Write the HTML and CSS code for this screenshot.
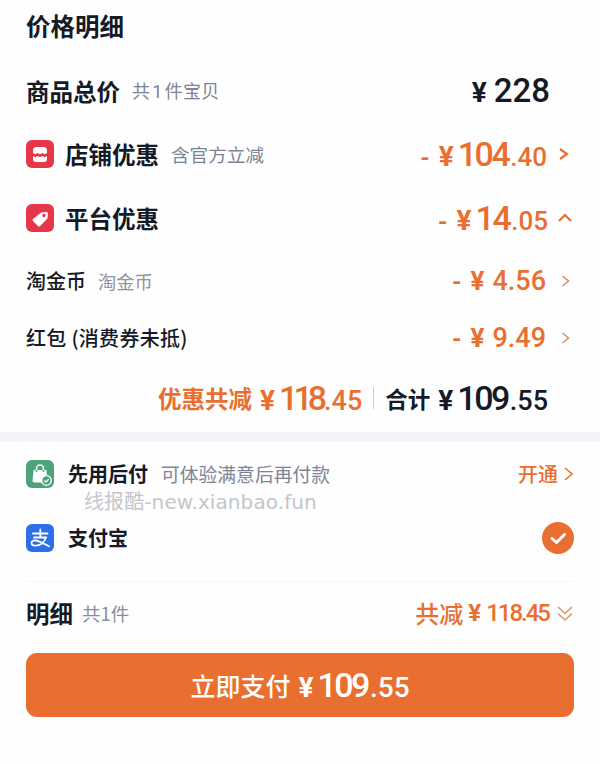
FILE: index.html
```html
<!DOCTYPE html>
<html lang="zh">
<head>
<meta charset="utf-8">
<title>价格明细</title>
<link rel="stylesheet" href="styles.css">
</head>
<body>
<section class="price">
  <h1 class="title">价格明细</h1>
  <div class="row row-total">
    <span class="name-lg">商品总价</span><span class="note note-total">共<i class="num-note">1</i>件宝贝</span>
    <span class="amount dark amount-total"><span class="yen yen-total">¥</span><span class="plain">228</span></span>
  </div>
  <div class="row row-shop">
    <svg class="ico" viewBox="0 0 28 28"><rect width="28" height="28" rx="6" fill="#e5374a"/><path d="M7 13v-2.500A3.500 3.500 0 0 1 10.500 7h7a3.500 3.500 0 0 1 3.500 3.500V13l-2.300 1.300-2.400-1.300-2.300 1.300-2.300-1.300-2.400 1.300z M7 16l2.300 1.300 2.400-1.300 2.300 1.300 2.300-1.300 2.400 1.300L21 16v3a3 3 0 0 1-3 3h-8a3 3 0 0 1-3-3z" fill="#fff"/></svg>
    <span class="name-lg">店铺优惠</span><span class="note note-shop">含官方立减</span>
    <span class="amount orange"><span class="minus">-</span><span class="yen">¥</span><span class="big">104</span><span class="dec">.40</span></span>
    <svg class="chev" viewBox="0 0 12 14"><path d="M2 2l7 5-7 5"/></svg>
  </div>
  <div class="row row-plat">
    <svg class="ico" viewBox="0 0 28 28"><rect width="28" height="28" rx="6" fill="#e5374a"/><path d="M15.500 8.500l5-.500a1.200 1.200 0 0 1 1.300 1.300l-.3 4.700a1.500 1.500 0 0 1-.5 1L14 22a1.500 1.500 0 0 1-2.100 0L7 17.100a1.500 1.500 0 0 1 0-2.100l7.500-6.100a1.500 1.500 0 0 1 1-.4z" fill="#fff"/><circle cx="18" cy="11.500" r="1.700" fill="#e5374a"/></svg>
    <span class="name-lg">平台优惠</span>
    <span class="amount orange"><span class="minus">-</span><span class="yen">¥</span><span class="big">14</span><span class="dec">.05</span></span>
    <svg class="chev chev-up" viewBox="0 0 16 12"><path d="M2 9l6-6 6 6"/></svg>
  </div>
  <div class="row row-coin">
    <span class="name-sm">淘金币</span><span class="note note-coin">淘金币</span>
    <span class="amount orange"><span class="minus">-</span><span class="yen yen-mid">¥</span><span class="mid">4.56</span></span>
    <svg class="chev chev-thin" viewBox="0 0 12 14"><path d="M2.500 2l6 5-6 5"/></svg>
  </div>
  <div class="row row-red">
    <span class="name-sm name-red">红包 (消费券未抵)</span>
    <span class="amount orange"><span class="minus">-</span><span class="yen yen-mid">¥</span><span class="mid">9.49</span></span>
    <svg class="chev chev-thin" viewBox="0 0 12 14"><path d="M2.500 2l6 5-6 5"/></svg>
  </div>
  <div class="summary">
    <span class="sum-label orange">优惠共减</span>
    <span class="amount orange sum-a"><span class="yen">¥</span><span class="big big-118">118</span><span class="sum-dec">.45</span></span>
    <span class="vline"></span>
    <span class="sum-label sum-total dark">合计</span>
    <span class="amount dark sum-b"><span class="yen">¥</span><span class="big">109</span><span class="sum-dec">.55</span></span>
  </div>
</section>
<div class="band"></div>
<section class="pay">
  <div class="row row-later">
    <svg class="ico ico-pay" viewBox="0 0 28 28"><rect width="28" height="28" rx="6" fill="#4ea27c"/><path d="M7.700 10h12.600l.7 6.200a5 5 0 0 0-5.200 6.300H8.500A2 2 0 0 1 6.500 20.300z" fill="#fff"/><path d="M10.500 12V8.500a3.500 3.500 0 0 1 7 0V12" fill="none" stroke="#fff" stroke-width="1.500"/><path d="M10.500 10v2M17.500 10v2" stroke="#4ea27c" stroke-width="1.500"/><circle cx="20.500" cy="20.500" r="4.800" fill="#4ea27c" stroke="#fff" stroke-width="1.300"/><path d="M18.300 20.500l1.700 1.600 2.700-3" fill="none" stroke="#fff" stroke-width="1.300"/></svg>
    <span class="name-md">先用后付</span><span class="note note-later">可体验满意后再付款</span>
    <span class="open">开通</span>
    <svg class="chev chev-open" viewBox="0 0 12 16"><path d="M2 2l7 6-7 6"/></svg>
  </div>
  <div class="row row-ali">
    <svg class="ico ico-pay" viewBox="0 0 28 28"><rect width="28" height="28" rx="6" fill="#2d6fe8"/><path d="M7 9.500h14.500M14.300 5.500v7.500M8 13.500h12c-1.500 4.500-5.500 8.200-10.500 8.200-2.500 0-4-1.200-4-2.700 0-1.900 2.200-3 4.700-2.500 3.500.7 8 3.500 12.800 5.700" fill="none" stroke="#fff" stroke-width="1.800" stroke-linecap="round"/></svg>
    <span class="name-md">支付宝</span>
    <span class="check"><svg viewBox="0 0 32 32"><path d="M10 16.500l4.500 4 8-8" fill="none" stroke="#fff" stroke-width="3" stroke-linecap="round" stroke-linejoin="round"/></svg></span>
  </div>
  <div class="hair"></div>
  <div class="row row-detail">
    <span class="name-lg">明细</span><span class="note note-detail">共1件</span>
    <span class="save-label orange">共减</span>
    <span class="amount orange save"><span class="yen">¥</span><span class="save-num">118.45</span></span>
    <svg class="chev-double" viewBox="0 0 18 18"><path d="M2 3l7 6.500L16 3M2 9.500L9 16l7-6.500"/></svg>
  </div>
  <button class="buy"><span class="buy-label">立即支付</span><span class="amount buy-amount"><span class="yen">¥</span><span class="big">109</span><span class="buy-dec">.55</span></span></button>
</section>
<div class="mark">线报酷-new.xianbao.fun</div>
</body>
</html>
```
FILE: styles.css
```css
* { box-sizing: border-box; }
html, body { margin: 0; padding: 0; }
body {
  position: relative;
  width: 600px;
  height: 764px;
  overflow: hidden;
  background: #fefefe;
  color: #141a26;
  font-family: "Noto Sans CJK SC", "Noto Sans", sans-serif;
}
.price { padding: 0 26px; height: 432px; }
.pay { padding: 0 26px; }
.title { margin: 0; height: 54px; font-size: 24.500px; line-height: 52px; font-weight: 700; }
.row { display: flex; align-items: center; }
.row-total { height: 73px; }
.row-shop { height: 54px; }
.row-plat { height: 54px; margin-top: 10px; }
.row-coin { height: 44px; margin-top: 14px; }
.row-red { height: 44px; margin-top: 13px; }
.ico { width: 28px; height: 28px; flex: none; margin-right: 11px; }
.ico-pay { margin-right: 14px; }
.name-lg { font-size: 23.500px; font-weight: 700; line-height: 30px; }
.name-md { font-size: 20px; font-weight: 700; line-height: 28px; }
.name-sm { font-size: 20px; font-weight: 500; line-height: 28px; }
.name-red { letter-spacing: .3px; }
.note { margin-left: 13px; font-size: 18.600px; color: #7d8494; line-height: 26px; }
.num-note { font-style: normal; font-family: Roboto, sans-serif; margin: 0 2px; }
.note-total { font-size: 18px; margin-left: 12px; letter-spacing: .3px; }
.note-shop { margin-left: 12px; }
.note-coin { font-size: 18.300px; margin-left: 12px; color: #8c93a2; }
.note-later { font-size: 18.800px; }
.amount { display: inline-flex; align-items: baseline; margin-left: auto; font-family: Roboto, sans-serif; font-weight: 500; }
.orange { color: #e96f30; }
.dark { color: #141a26; }
.minus { font-size: 24px; font-weight: 700; margin-right: 9px; }
.yen { font-size: 28px; font-weight: 700; margin-right: 4px; }
.yen-total { margin-right: 7px; }
.yen-mid { font-size: 26px; margin-right: 8px; }
.big { font-size: 34px; letter-spacing: -2.500px; margin-right: 2px; }
.big-118 { letter-spacing: -5px; }
.plain { font-size: 33px; }
.dec { font-size: 26px; }
.mid { font-size: 27px; }
.amount-total { margin-right: 24px; }
.chev { width: 12px; height: 14px; flex: none; margin-left: 11px; margin-right: 4px; fill: none; stroke: #e96f30; stroke-width: 2.200; }
.chev-up { width: 16px; height: 12px; margin-left: 9px; margin-right: 1px; }
.chev-thin { stroke-width: 1.500; stroke: #d98a5c; margin-left: 14px; margin-right: 2px; }
.summary { display: flex; align-items: center; justify-content: flex-end; height: 40px; margin-top: 18px; padding-right: 26px; }
.sum-label { font-size: 23.500px; font-weight: 700; line-height: 30px; }
.sum-total { font-size: 22.500px; }
.summary .amount { margin-left: 8px; }
.sum-dec { font-size: 27px; }
.vline { width: 1px; height: 22px; background: #c9ccd2; margin: 0 11px; }
.band { height: 10px; background: #f2f3f6; }
.row-later { height: 46px; margin-top: 9px; }
.row-ali { height: 46px; margin-top: 18px; }
.open { margin-left: auto; font-size: 20px; color: #e96f30; font-weight: 500; line-height: 28px; }
.chev-open { width: 12px; height: 16px; margin-left: 5px; margin-right: -1px; stroke-width: 1.600; }
.check { display: flex; margin-left: auto; width: 32px; height: 32px; border-radius: 50%; background: #e96f30; }
.check svg { width: 32px; height: 32px; }
.hair { height: 1px; background: #f5f6f7; margin-top: 20px; }
.row-detail { height: 62px; }
.note-detail { margin-left: 9px; font-size: 18.500px; color: #8a8f9b; }
.save-label { margin-left: auto; font-size: 24px; font-weight: 500; line-height: 30px; }
.save { margin-left: 5px; }
.save .yen { font-size: 24px; margin-right: 5px; }
.save-num { font-size: 24px; letter-spacing: -2px; }
.chev-double { width: 18px; height: 18px; flex: none; margin-left: 7px; fill: none; stroke: #dc9669; stroke-width: 1.500; }
.buy {
  display: flex;
  align-items: center;
  justify-content: center;
  width: 548px;
  height: 64px;
  margin-top: 9px;
  padding: 0;
  border: 0;
  border-radius: 11px;
  background: #e96f30;
  color: #fff;
}
.buy-label { font-family: "Noto Sans CJK SC", sans-serif; font-size: 25px; font-weight: 500; margin-right: 8px; }
.buy-amount { margin-left: 0; }
.buy-dec { font-size: 28px; }
.mark {
  position: absolute;
  left: 84px;
  top: 488px;
  font-family: "DejaVu Sans", "Noto Sans CJK SC", sans-serif;
  font-size: 20px;
  line-height: 28px;
  letter-spacing: .1px;
  color: #c3c6ca;
  white-space: nowrap;
}
```
